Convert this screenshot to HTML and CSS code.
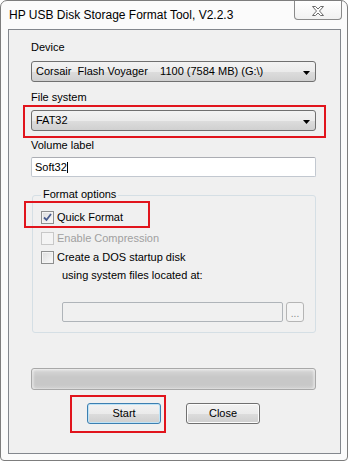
FILE: index.html
```html
<!DOCTYPE html>
<html>
<head>
<meta charset="utf-8">
<link rel="stylesheet" href="styles.css">
</head>
<body>
<div class="win">
  <div class="titlebar">
    <span class="title">HP USB Disk Storage Format Tool, V2.2.3</span>
    <div class="closebtn">
      <svg width="14" height="10" viewBox="0 0 14 10"><path d="M1.5 0.5 L4.5 0.5 L7 3 L9.5 0.5 L12.5 0.5 L8.5 5 L12.5 9.5 L9.5 9.5 L7 7 L4.5 9.5 L1.5 9.5 L5.5 5 Z" fill="#fdfdfd" stroke="#6b6b6b" stroke-width="1" stroke-linejoin="round"/></svg>
    </div>
  </div>
  <div class="client">
    <div class="label lab-device">Device</div>
    <div class="combo combo-device"><span class="combo-text">Corsair  Flash Voyager    1100 (7584 MB) (G:\)</span><svg class="arrow" width="7" height="4" viewBox="0 0 7 4"><path d="M0 0 H7 L3.5 4 Z" fill="#000"/></svg></div>
    <div class="label lab-fs">File system</div>
    <div class="combo combo-fs"><span class="combo-text">FAT32</span><svg class="arrow" width="7" height="4" viewBox="0 0 7 4"><path d="M0 0 H7 L3.5 4 Z" fill="#000"/></svg></div>
    <div class="label lab-vol">Volume label</div>
    <div class="textbox"><span>Soft32</span><span class="caret"></span></div>
    <div class="group">
      <div class="group-title">Format options</div>
      <div class="check-row row-quick"><span class="cb"><svg width="9" height="9" viewBox="0 0 9 9"><path d="M1 4.5 L3.5 7 L8 1" fill="none" stroke="#4a5d8e" stroke-width="1.8"/></svg></span><span>Quick Format</span></div>
      <div class="check-row row-comp disabled"><span class="cb"></span><span>Enable Compression</span></div>
      <div class="check-row row-dos"><span class="cb"></span><span>Create a DOS startup disk</span></div>
      <div class="subtext">using system files located at:</div>
      <div class="path-row"><div class="pathbox"></div><div class="browse">...</div></div>
    </div>
    <div class="progress"></div>
    <div class="buttons"><div class="btn btn-default">Start</div><div class="btn">Close</div></div>
    <div class="redbox rb-fs"></div>
    <div class="redbox rb-quick"></div>
    <div class="redbox rb-start"></div>
  </div>
</div>
</body>
</html>
```
FILE: styles.css
```css
html, body { margin: 0; padding: 0; background: #ffffff; }
body { font-family: "Liberation Sans", Arial, sans-serif; font-size: 11px; color: #000; }

.win {
  width: 348px; height: 461px; box-sizing: border-box;
  border: 1px solid #7d7d7d; border-radius: 7px 7px 4px 4px;
  background: #fbfbfb;
}
.titlebar { display: flex; justify-content: space-between; align-items: flex-start; height: 28px; }
.title { font-size: 12px; line-height: 15px; padding: 7px 0 0 8px; color: #000; }
.closebtn {
  width: 48px; height: 19px; box-sizing: border-box; margin-right: 5px;
  border: 1px solid #8a8a8a; border-top: none; border-radius: 0 0 4px 4px;
  background: linear-gradient(#ffffff, #f1f1f1);
  display: flex; align-items: center; justify-content: center; padding-top: 1px;
}
.client {
  position: relative; margin-left: 7px; width: 333px; height: 425px; box-sizing: border-box;
  border: 1px solid #83878d; background: #f0f0f0; padding-left: 22px;
}
.label { line-height: 13px; white-space: nowrap; }
.lab-device { padding-top: 11px; }
.lab-fs { margin-top: 9px; }
.lab-vol { margin-top: 8px; }

.combo {
  width: 285px; height: 21px; box-sizing: border-box;
  border: 1px solid #707070; border-radius: 3px;
  background: linear-gradient(#f3f3f3 0%, #ebebeb 50%, #dddddd 51%, #d0d0d0 100%);
  display: flex; align-items: center; justify-content: space-between;
  padding: 0 5px 0 4px;
}
.combo-device { margin-top: 7px; }
.combo-fs { margin-top: 6px; }
.combo-text { white-space: pre; line-height: 13px; }
.arrow { display: block; margin-top: 2px; }

.textbox {
  margin-top: 5px; width: 285px; height: 20px; box-sizing: border-box;
  border: 1px solid #c2c8d0; border-top-color: #abadb3; border-radius: 2px;
  background: #fff; display: flex; align-items: center; padding-left: 3px;
}
.caret { width: 1px; height: 11px; background: #000; margin-left: 0; }

.group {
  margin-top: 18px; margin-left: 1px; width: 284px; height: 138px; box-sizing: border-box;
  border: 1px solid #d5dfe5; border-radius: 3px; padding-left: 8px;
}
.group-title {
  margin-top: -8px; margin-left: 0; padding: 0 2px; width: fit-content;
  line-height: 13px; background: #f0f0f0;
}
.check-row { display: flex; align-items: center; gap: 3px; height: 13px; line-height: 13px; white-space: nowrap; }
.row-quick { margin-top: 10px; }
.row-comp { margin-top: 8px; }
.row-dos { margin-top: 6px; }
.cb {
  width: 13px; height: 13px; box-sizing: border-box; flex: none;
  border: 1px solid #8e8f8f; background: linear-gradient(135deg, #dcdcdc, #fbfbfb);
  box-shadow: inset 0 0 0 1px #f4f4f4;
  display: flex; align-items: center; justify-content: center;
}
.disabled { color: #a0a0a0; }
.disabled .cb { border-color: #c8c8c8; background: #f4f4f4; box-shadow: none; }
.subtext { margin: 5px 0 0 21px; line-height: 13px; white-space: nowrap; }
.path-row { margin: 20px 0 0 21px; display: flex; gap: 3px; }
.pathbox {
  width: 221px; height: 20px; box-sizing: border-box;
  border: 1px solid #afb4b9; border-radius: 2px; background: #f0f0f0;
}
.browse {
  width: 18px; height: 20px; box-sizing: border-box;
  border: 1px solid #b5b5b5; border-radius: 3px; background: #f4f4f4;
  color: #8a8a8a; text-align: center; line-height: 22px; font-size: 10px;
}

.progress {
  margin-top: 35px; width: 285px; height: 22px; box-sizing: border-box;
  border: 1px solid #a8a8a8; border-radius: 3px;
  background: linear-gradient(#e9e9e9 0, #d2d2d2 3px, #c8c8c8 8px, #c8c8c8 16px, #d4d4d4 100%);
  box-shadow: inset 2px 0 2px rgba(255,255,255,0.4), inset -2px 0 2px rgba(255,255,255,0.4);
}
.buttons { margin: 13px 0 0 56px; display: flex; gap: 25px; }
.btn {
  width: 74px; height: 21px; box-sizing: border-box;
  border: 1px solid #707070; border-radius: 3px;
  background: linear-gradient(#f2f2f2 0%, #ebebeb 50%, #dddddd 51%, #cfcfcf 100%);
  box-shadow: inset 0 0 0 1px #fcfcfc;
  text-align: center; line-height: 19px;
}
.btn-default { border-color: #3c7fb1; box-shadow: inset 0 0 0 1px #bfe3f6; }

.redbox { position: absolute; box-sizing: border-box; border: 2px solid #e1141c; }
.rb-fs { left: 14px; top: 75px; width: 303px; height: 33px; }
.rb-quick { left: 15px; top: 171px; width: 126px; height: 27px; }
.rb-start { left: 61px; top: 365px; width: 96px; height: 38px; }
```
